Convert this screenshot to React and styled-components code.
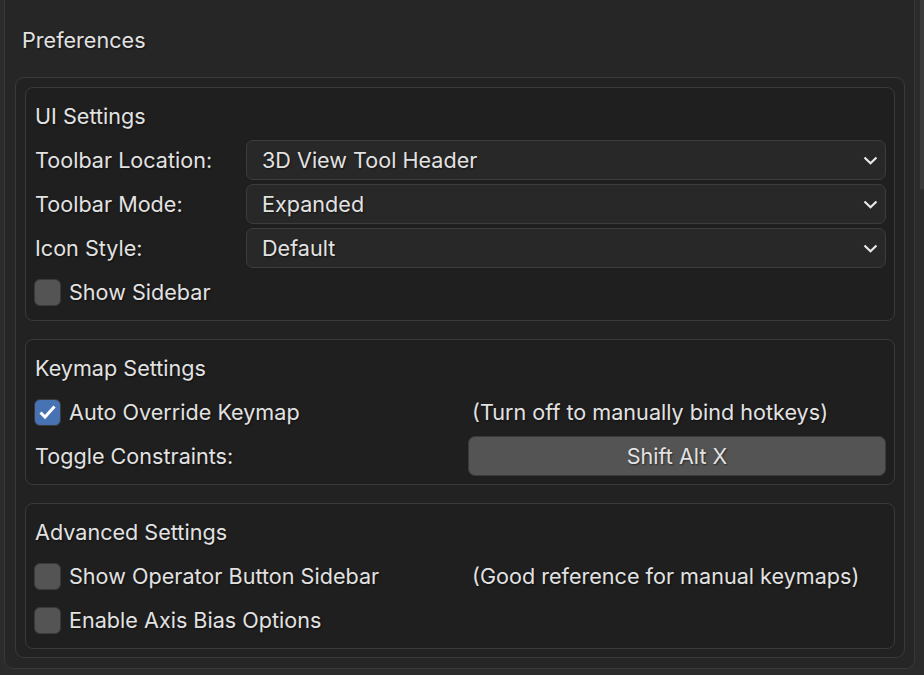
import React from "react";
import styled, { createGlobalStyle } from "styled-components";

const Global = createGlobalStyle`
  html, body {
    margin: 0;
    padding: 0;
    background: #2b2b2b;
  }
  body {
    font-family: Inter, "Noto Sans", sans-serif;
    color: #e2e2e2;
  }
`;

const Screen = styled.div`
  display: flex;
  width: 924px;
  height: 675px;
  overflow: hidden;
`;

const Region = styled.div`
  box-sizing: border-box;
  width: 911px;
  height: 669px;
  margin-left: 4px;
  padding: 0 9px 10px 10px;
  background: #262626;
  border: 1px solid #383838;
  border-top: none;
  border-radius: 0 0 9px 9px;
  display: flex;
  flex-direction: column;
`;

const Scroll = styled.div`
  width: 4px;
  height: 190px;
  margin-left: 5px;
  background: #3b3b3b;
  border-radius: 0 0 3px 3px;
`;

const Title = styled.div`
  height: 40px;
  line-height: 40px;
  margin: 20px 0 17px 7px;
  font-size: 21.6px;
  text-shadow: 1px 1px 2px rgba(0, 0, 0, 0.55);
`;

const Panel = styled.div`
  box-sizing: border-box;
  border: 1px solid #3a3a3a;
  border-radius: 9px;
  background: #222222;
  padding: 9px 9px 8px;
  display: flex;
  flex-direction: column;
  gap: 18px;
`;

const Box = styled.div`
  border: 1px solid #3a3a3a;
  border-radius: 8px;
  background: #1f1f1f;
  padding: 8px 8px 8px 9px;
  display: flex;
  flex-direction: column;
  gap: 4px;
`;

const Row = styled.div`
  display: grid;
  grid-template-columns: ${({ split }) => split}px 1fr;
  align-items: center;
  height: 40px;
`;

const Text = styled.span`
  font-size: 21.6px;
  white-space: nowrap;
  padding-left: ${({ inset }) => inset || 0}px;
  text-shadow: 1px 1px 2px rgba(0, 0, 0, 0.55);
`;

const Select = styled.div`
  box-sizing: border-box;
  height: 40px;
  display: flex;
  align-items: center;
  justify-content: space-between;
  padding: 0 7px 0 15px;
  background: #282828;
  border: 1px solid #3c3c3c;
  border-radius: 7px;
`;

const Button = styled.div`
  box-sizing: border-box;
  height: 40px;
  display: flex;
  align-items: center;
  justify-content: center;
  background: #545454;
  border: 1px solid #3a3a3a;
  border-radius: 7px;
`;

const Check = styled.label`
  display: flex;
  align-items: center;
  gap: 8px;
`;

const Tick = styled.span`
  box-sizing: border-box;
  width: 27px;
  height: 27px;
  margin-left: -1px;
  border-radius: 6px;
  border: 1px solid #3a3a3a;
  background: ${({ on }) => (on ? "#4772b3" : "#545454")};
  display: flex;
  align-items: center;
  justify-content: center;
`;

const Chevron = () => (
  <svg width="15" height="9" viewBox="0 0 15 9">
    <path d="M1.5 1.5 L7.5 7.2 L13.5 1.5" fill="none" stroke="#e8e8e8" strokeWidth="2.2" />
  </svg>
);

const CheckBox = ({ on, children }) => (
  <Check>
    <Tick on={on}>
      {on && (
        <svg width="19" height="16" viewBox="0 0 19 16">
          <path d="M2.5 8.5 L7 13 L16.5 2.5" fill="none" stroke="#ffffff" strokeWidth="3" />
        </svg>
      )}
    </Tick>
    <Text>{children}</Text>
  </Check>
);

const Dropdown = ({ label, value }) => (
  <Row split={211}>
    <Text>{label}</Text>
    <Select>
      <Text>{value}</Text>
      <Chevron />
    </Select>
  </Row>
);

const App = () => (
  <Screen>
    <Global />
    <Region>
      <Title>Preferences</Title>
      <Panel>
        <Box>
          <Row split={211}>
            <Text>UI Settings</Text>
          </Row>
          <Dropdown label="Toolbar Location:" value="3D View Tool Header" />
          <Dropdown label="Toolbar Mode:" value="Expanded" />
          <Dropdown label="Icon Style:" value="Default" />
          <Row split={433}>
            <CheckBox>Show Sidebar</CheckBox>
          </Row>
        </Box>
        <Box>
          <Row split={433}>
            <Text>Keymap Settings</Text>
          </Row>
          <Row split={433}>
            <CheckBox on>Auto Override Keymap</CheckBox>
            <Text inset={4}>(Turn off to manually bind hotkeys)</Text>
          </Row>
          <Row split={433}>
            <Text>Toggle Constraints:</Text>
            <Button>
              <Text>Shift Alt X</Text>
            </Button>
          </Row>
        </Box>
        <Box>
          <Row split={433}>
            <Text>Advanced Settings</Text>
          </Row>
          <Row split={433}>
            <CheckBox>Show Operator Button Sidebar</CheckBox>
            <Text inset={4}>(Good reference for manual keymaps)</Text>
          </Row>
          <Row split={433}>
            <CheckBox>Enable Axis Bias Options</CheckBox>
          </Row>
        </Box>
      </Panel>
    </Region>
    <Scroll />
  </Screen>
);

export default App;
